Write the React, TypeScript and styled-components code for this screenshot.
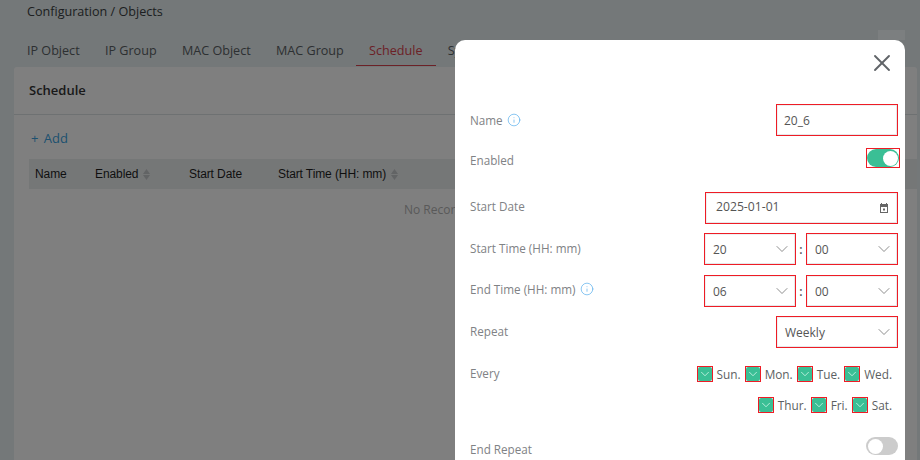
import React from "react";
import styled, { createGlobalStyle } from "styled-components";
import { X, ChevronDown, Info } from "lucide-react";

const Global = createGlobalStyle`
  html, body { margin: 0; padding: 0; height: 100%; overflow: hidden; }
  body { font-family: "Open Sans", "Noto Sans", sans-serif; background: #e8f0f2; }
  #root { height: 100%; }
`;

const Page = styled.div`
  position: relative;
  width: 920px;
  height: 460px;
  overflow: hidden;
  background: #e8f0f2;
  padding: 0 3px 0 14px;
  box-sizing: border-box;
`;

const Breadcrumb = styled.div`
  height: 24px;
  padding-left: 13px;
  font-size: 12.6px;
  line-height: 23px;
  color: #3a3f42;
`;

const Tabs = styled.div`
  display: flex;
  height: 42px;
  padding: 0 0 0 13px;
  gap: 25.3px;
  align-items: flex-end;
`;

const Tab = styled.div<{ $active?: boolean }>`
  font-size: 12.6px;
  height: 32px;
  line-height: 33px;
  box-sizing: border-box;
  color: ${(p) => (p.$active ? "#d9434e" : "#5a6064")};
  ${(p) => p.$active && "border-bottom: 1px solid #d9434e; margin: 0 -13px; padding: 0 13px; "}
`;

const Panel = styled.div`
  background: #fff;
  height: 394px;
  margin-top: 1px;
  border-radius: 3px 3px 0 0;
`;

const PanelTitle = styled.div`
  height: 47px;
  padding-left: 15px;
  font-size: 13px;
  font-weight: 600;
  line-height: 46px;
  color: #333;
  border-bottom: 1px solid #dde2e5;
`;

const AddLink = styled.div`
  padding-left: 17px;
  margin-top: 13px;
  height: 31px;
  font-size: 13px;
  word-spacing: 2px;
  line-height: 20px;
  color: #3aa2e0;
`;

const HeaderRow = styled.div`
  display: flex;
  align-items: center;
  height: 30px;
  margin-left: 15px;
  background: #ebeeef;
  font-family: "Liberation Sans", Arial, sans-serif;
  font-size: 12px;
  letter-spacing: -0.1px;
  color: #1f1f1f;
`;

const HeaderCell = styled.div<{ $w: number }>`
  display: flex;
  align-items: center;
  gap: 5px;
  width: ${(p) => p.$w}px;
  padding-left: 6px;
  box-sizing: border-box;
  flex: none;
`;

const SortIcon = styled.span`
  display: inline-flex;
  flex-direction: column;
  gap: 1px;
  color: #c4c8ca;
  svg { display: block; }
`;

const Empty = styled.div`
  margin: 12px 0 0 390px;
  font-size: 12px;
  color: #b3b3b3;
`;

const Overlay = styled.div`
  position: absolute;
  inset: 0;
  background: rgba(0, 0, 0, 0.5);
`;

const Modal = styled.div`
  position: absolute;
  left: 455px;
  top: 40px;
  width: 450px;
  height: 440px;
  box-sizing: border-box;
  background: #fff;
  border-radius: 10px;
  padding: 64px 7px 0 15px;
  font-size: 12px;
  color: #808080;
`;

const CloseButton = styled.div`
  position: absolute;
  top: 9px;
  right: 9px;
  color: #606468;
  display: flex;
  svg { display: block; }
`;

const Row = styled.div<{ $top?: number; $h: number }>`
  display: flex;
  justify-content: space-between;
  align-items: center;
  height: ${(p) => p.$h}px;
  margin-top: ${(p) => p.$top ?? 0}px;
`;

const Label = styled.div<{ $shift?: number; $alignTop?: boolean }>`
  display: flex;
  align-items: center;
  gap: 4px;
  color: #808285;
  font-size: 11.7px;
  position: relative;
  top: ${(p) => p.$shift ?? 0}px;
  ${(p) => p.$alignTop && "align-self: flex-start;"}
  svg { color: #4aa8ea; }
`;

const Field = styled.div<{ $w: number; $pad?: number }>`
  display: flex;
  align-items: center;
  justify-content: space-between;
  box-sizing: border-box;
  width: ${(p) => p.$w}px;
  height: 32px;
  padding: 0 4px 0 ${(p) => p.$pad ?? 9}px;
  background: #fff;
  outline: 1px solid #ee1c25;
  outline-offset: -1px;
  box-shadow: inset -1px -1px 0 1px #e6e8ea, inset 0 0 0 2px #eef0f1;
  font-size: 12px;
  color: #555;
  svg { color: #777; flex: none; }
`;

const DateText = styled.span`
  font-size: 12.2px;
  position: relative;
  top: -2px;
`;

const TimeGroup = styled.div`
  display: flex;
  align-items: center;
`;

const Colon = styled.span`
  width: 10px;
  text-align: center;
  font-size: 12px;
  font-weight: 600;
  color: #555;
`;

const Toggle = styled.div<{ $on?: boolean }>`
  position: relative;
  width: 32px;
  height: 18px;
  border-radius: 9px;
  background: ${(p) => (p.$on ? "#3abf95" : "#ccc")};
`;

const Knob = styled.span<{ $on?: boolean }>`
  position: absolute;
  top: 1.5px;
  ${(p) => (p.$on ? "right: 1.5px;" : "left: 1.5px;")}
  width: 15px;
  height: 15px;
  border-radius: 50%;
  background: #fff;
`;

const ToggleMark = styled.div`
  box-sizing: border-box;
  width: 34px;
  height: 20px;
  margin-right: -2px;
  border: 1px solid #ee1c25;
  display: flex;
  align-items: center;
`;

const DayStack = styled.div`
  display: flex;
  flex-direction: column;
  align-items: flex-end;
  gap: 15px;
  padding-right: 6px;
`;

const DayLine = styled.div`
  display: flex;
  gap: 4px;
`;

const Day = styled.div`
  display: flex;
  align-items: center;
  gap: 4px;
  height: 16px;
  font-size: 11.8px;
  color: #5c5f62;
`;

const Box = styled.span`
  display: flex;
  box-sizing: border-box;
  width: 16px;
  height: 16px;
  border: 1px solid #ee1c25;
  background: #fff;
`;

const Tick = styled.span`
  display: flex;
  align-items: center;
  justify-content: center;
  flex: 1;
  background: #3abf95;
  border-radius: 2px;
  svg { color: #e8fff6; display: block; }
`;

const Scroll = styled.div`
  position: absolute;
  left: 878px;
  top: 30px;
  width: 27px;
  height: 10px;
  background: rgba(255, 255, 255, 0.06);
`;

const Select = ({ w, value, pad }: { w: number; value: string; pad?: number }) => (
  <Field $w={w} $pad={pad}>
    {value}
    <ChevronDown size={20} strokeWidth={1} />
  </Field>
);

const CalendarGlyph = () => (
  <svg width="20" height="12" viewBox="0 0 20 12" fill="none">
    <path d="M7 1h1v1h4V1h1v1h1v9H6V2h1zM7 5v5h6V5z" fill="#666" fillRule="evenodd" />
    <rect x="9" y="6.5" width="2" height="2" fill="#666" />
  </svg>
);

const days1 = ["Sun.", "Mon.", "Tue.", "Wed."];
const days2 = ["Thur.", "Fri.", "Sat."];

const DayItem = ({ d }: { d: string }) => (
  <Day>
    <Box>
      <Tick>
        <ChevronDown size={14} strokeWidth={1.2} />
      </Tick>
    </Box>
    {d}
  </Day>
);

const Sort = () => (
  <SortIcon>
    <svg width="7" height="5" viewBox="0 0 7 5"><path d="M3.5 0 7 5H0z" fill="currentColor" /></svg>
    <svg width="7" height="5" viewBox="0 0 7 5"><path d="M0 0h7L3.5 5z" fill="currentColor" /></svg>
  </SortIcon>
);

export default function App() {
  return (
    <Page>
      <Global />
      <Breadcrumb>Configuration / Objects</Breadcrumb>
      <Tabs>
        <Tab>IP Object</Tab>
        <Tab>IP Group</Tab>
        <Tab>MAC Object</Tab>
        <Tab>MAC Group</Tab>
        <Tab $active>Schedule</Tab>
        <Tab>Sy</Tab>
      </Tabs>
      <Panel>
        <PanelTitle>Schedule</PanelTitle>
        <AddLink>+ Add</AddLink>
        <HeaderRow>
          <HeaderCell $w={60}>Name</HeaderCell>
          <HeaderCell $w={94}>Enabled <Sort /></HeaderCell>
          <HeaderCell $w={89}>Start Date</HeaderCell>
          <HeaderCell $w={200}>Start Time (HH: mm) <Sort /></HeaderCell>
        </HeaderRow>
        <Empty>No Records</Empty>
      </Panel>
      <Overlay />
      <Scroll />
      <Modal>
        <CloseButton><X size={28} strokeWidth={1.6} /></CloseButton>
        <Row $h={32}>
          <Label>Name <Info size={14} strokeWidth={1.1} /></Label>
          <Field $w={122} $pad={8}>20_6</Field>
        </Row>
        <Row $h={20} $top={12}>
          <Label $shift={2}>Enabled</Label>
          <ToggleMark><Toggle $on><Knob $on /></Toggle></ToggleMark>
        </Row>
        <Row $h={32} $top={24}>
          <Label $shift={-2}>Start Date</Label>
          <Field $w={193} $pad={11}><DateText>2025-01-01</DateText><CalendarGlyph /></Field>
        </Row>
        <Row $h={32} $top={9}>
          <Label $shift={-1}>Start Time (HH: mm)</Label>
          <TimeGroup>
            <Select w={92} value="20" />
            <Colon>:</Colon>
            <Select w={92} value="00" />
          </TimeGroup>
        </Row>
        <Row $h={32} $top={10}>
          <Label $shift={-2}>End Time (HH: mm) <Info size={14} strokeWidth={1.1} /></Label>
          <TimeGroup>
            <Select w={92} value="06" />
            <Colon>:</Colon>
            <Select w={92} value="00" />
          </TimeGroup>
        </Row>
        <Row $h={32} $top={9}>
          <Label $shift={-1}>Repeat</Label>
          <Select w={122} value="Weekly" />
        </Row>
        <Row $h={47} $top={18}>
          <Label $alignTop $shift={-1}>Every</Label>
          <DayStack>
            <DayLine>{days1.map((d) => <DayItem key={d} d={d} />)}</DayLine>
            <DayLine>{days2.map((d) => <DayItem key={d} d={d} />)}</DayLine>
          </DayStack>
        </Row>
        <Row $h={18} $top={24}>
          <Label $shift={3}>End Repeat</Label>
          <Toggle><Knob /></Toggle>
        </Row>
      </Modal>
    </Page>
  );
}
